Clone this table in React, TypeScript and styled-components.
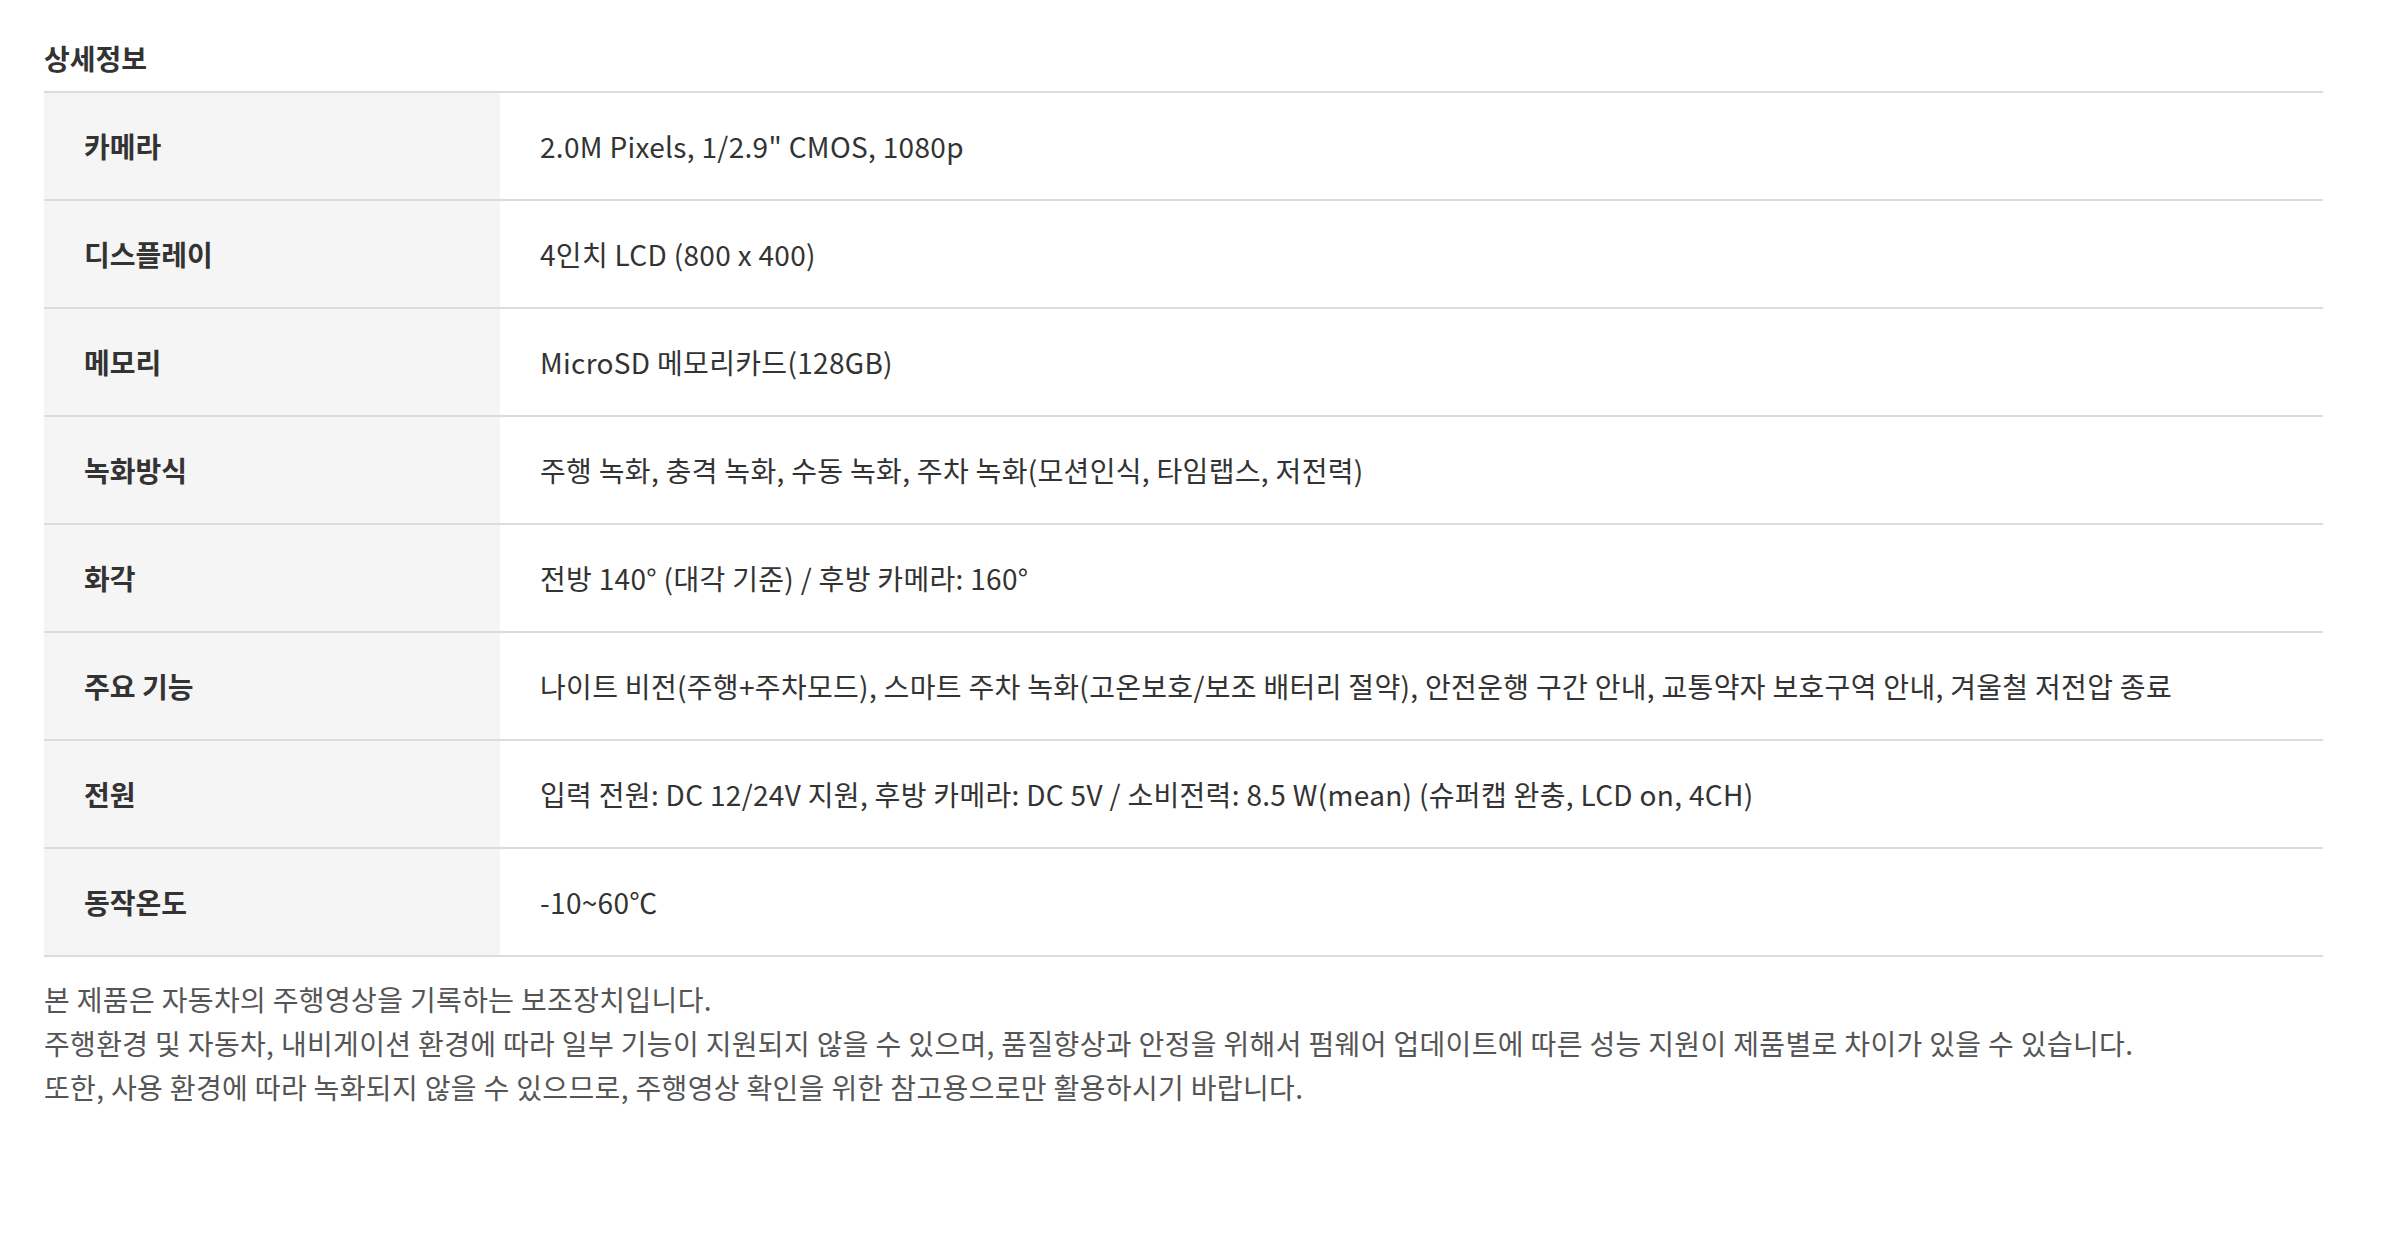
import React from "react";
import styled, { createGlobalStyle } from "styled-components";

const GlobalStyle = createGlobalStyle`
  html, body {
    margin: 0;
    padding: 0;
    background: #fff;
  }
  body {
    font-family: "Noto Sans CJK KR", "Noto Sans", sans-serif;
    color: #333;
  }
`;

const Page = styled.div`
  width: 2279px;
  padding: 37px 0 0 44px;
`;

const Title = styled.h3`
  margin: 0 0 12px;
  font-size: 28px;
  line-height: 42px;
  font-weight: 700;
  color: #333;
`;

const Table = styled.div`
  display: flex;
  flex-direction: column;
  border-top: 2px solid #dcdcdc;
`;

const Row = styled.div`
  display: grid;
  grid-template-columns: 456px 1fr;
  height: 108px;
  border-bottom: 2px solid #dcdcdc;
  box-sizing: border-box;
`;

const Label = styled.div`
  display: flex;
  align-items: center;
  padding-left: 40px;
  background: #f5f5f5;
  font-size: 28px;
  font-weight: 700;
  color: #333;
`;

const Value = styled.div`
  display: flex;
  align-items: center;
  padding-left: 40px;
  font-size: 28px;
  font-weight: 400;
  color: #333;
  letter-spacing: 0.32px;
`;

const Notes = styled.div`
  margin-top: 20px;
  font-size: 28px;
  line-height: 44px;
  color: #555;
  letter-spacing: 0.35px;
`;

const specs: [string, string][] = [
  ["카메라", "2.0M Pixels, 1/2.9\" CMOS, 1080p"],
  ["디스플레이", "4인치 LCD (800 x 400)"],
  ["메모리", "MicroSD 메모리카드(128GB)"],
  ["녹화방식", "주행 녹화, 충격 녹화, 수동 녹화, 주차 녹화(모션인식, 타임랩스, 저전력)"],
  ["화각", "전방 140° (대각 기준) / 후방 카메라: 160°"],
  [
    "주요 기능",
    "나이트 비전(주행+주차모드), 스마트 주차 녹화(고온보호/보조 배터리 절약), 안전운행 구간 안내, 교통약자 보호구역 안내, 겨울철 저전압 종료",
  ],
  ["전원", "입력 전원: DC 12/24V 지원, 후방 카메라: DC 5V / 소비전력: 8.5 W(mean) (슈퍼캡 완충, LCD on, 4CH)"],
  ["동작온도", "-10~60℃"],
];

const notes = [
  "본 제품은 자동차의 주행영상을 기록하는 보조장치입니다.",
  "주행환경 및 자동차, 내비게이션 환경에 따라 일부 기능이 지원되지 않을 수 있으며, 품질향상과 안정을 위해서 펌웨어 업데이트에 따른 성능 지원이 제품별로 차이가 있을 수 있습니다.",
  "또한, 사용 환경에 따라 녹화되지 않을 수 있으므로, 주행영상 확인을 위한 참고용으로만 활용하시기 바랍니다.",
];

const App = () => {
  return (
    <>
      <GlobalStyle />
      <Page>
        <Title>상세정보</Title>
        <Table>
          {specs.map(([label, value]) => (
            <Row key={label}>
              <Label>{label}</Label>
              <Value>{value}</Value>
            </Row>
          ))}
        </Table>
        <Notes>
          {notes.map((line) => (
            <div key={line}>{line}</div>
          ))}
        </Notes>
      </Page>
    </>
  );
};

export default App;
